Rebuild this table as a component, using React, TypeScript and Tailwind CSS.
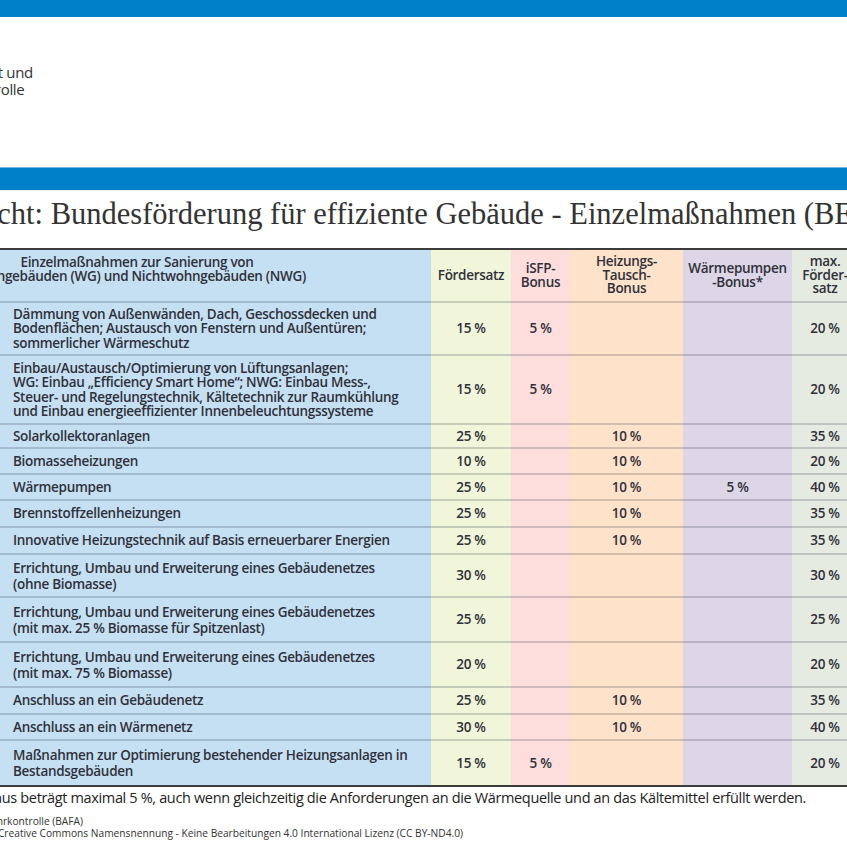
import React from "react";

type Row = {
  lines: string[];
  h: string;
  lead?: string;
  rate: string;
  isfp?: string;
  heiz?: string;
  wp?: string;
  max: string;
  last?: boolean;
};

const rows: Row[] = [
  {
    lines: [
      "Dämmung von Außenwänden, Dach, Geschossdecken und",
      "Bodenflächen; Austausch von Fenstern und Außentüren;",
      "sommerlicher Wärmeschutz",
    ],
    h: "h-[53px]",
    rate: "15 %",
    isfp: "5 %",
    max: "20 %",
  },
  {
    lines: [
      "Einbau/Austausch/Optimierung von Lüftungsanlagen;",
      "WG: Einbau „Efficiency Smart Home“; NWG: Einbau Mess-,",
      "Steuer- und Regelungstechnik, Kältetechnik zur Raumkühlung",
      "und Einbau energieeffizienter Innenbeleuchtungssysteme",
    ],
    h: "h-[69px]",
    rate: "15 %",
    isfp: "5 %",
    max: "20 %",
  },
  { lines: ["Solarkollektoranlagen"], h: "h-[24px]", rate: "25 %", heiz: "10 %", max: "35 %" },
  { lines: ["Biomasseheizungen"], h: "h-[26px]", rate: "10 %", heiz: "10 %", max: "20 %" },
  { lines: ["Wärmepumpen"], h: "h-[26px]", rate: "25 %", heiz: "10 %", wp: "5 %", max: "40 %" },
  { lines: ["Brennstoffzellenheizungen"], h: "h-[27px]", rate: "25 %", heiz: "10 %", max: "35 %" },
  {
    lines: ["Innovative Heizungstechnik auf Basis erneuerbarer Energien"],
    h: "h-[27px]",
    rate: "25 %",
    heiz: "10 %",
    max: "35 %",
  },
  {
    lines: ["Errichtung, Umbau und Erweiterung eines Gebäudenetzes", "(ohne Biomasse)"],
    h: "h-[43px]",
    lead: "leading-[16px]",
    rate: "30 %",
    max: "30 %",
  },
  {
    lines: [
      "Errichtung, Umbau und Erweiterung eines Gebäudenetzes",
      "(mit max. 25 % Biomasse für Spitzenlast)",
    ],
    h: "h-[45px]",
    lead: "leading-[16px]",
    rate: "25 %",
    max: "25 %",
  },
  {
    lines: ["Errichtung, Umbau und Erweiterung eines Gebäudenetzes", "(mit max. 75 % Biomasse)"],
    h: "h-[45px]",
    lead: "leading-[16px]",
    rate: "20 %",
    max: "20 %",
  },
  { lines: ["Anschluss an ein Gebäudenetz"], h: "h-[27px]", rate: "25 %", heiz: "10 %", max: "35 %" },
  { lines: ["Anschluss an ein Wärmenetz"], h: "h-[26px]", rate: "30 %", heiz: "10 %", max: "40 %" },
  {
    lines: ["Maßnahmen zur Optimierung bestehender Heizungsanlagen in", "Bestandsgebäuden"],
    h: "h-[44px]",
    lead: "leading-[16px]",
    rate: "15 %",
    isfp: "5 %",
    max: "20 %",
    last: true,
  },
];

const grid = "grid w-[858px] grid-cols-[431px_80px_59px_113px_109px_66px]";
const sep = "border-b-2 border-[#1e2a40]/20";

const TableRow = ({ row }: { row: Row }) => {
  const line = row.last ? "" : sep;
  const val = `flex items-center justify-center ${line}`;
  return (
    <div className={`${grid} ${row.h}`}>
      <div className={`flex flex-col justify-center bg-[#c6e0f3] pl-[13px] ${line} ${row.lead ?? "leading-[14.3px]"}`}>
        {row.lines.map((l) => (
          <span key={l} className="whitespace-nowrap">
            {l}
          </span>
        ))}
      </div>
      <div className={`bg-[#f1f6da] ${val}`}>{row.rate}</div>
      <div className={`bg-[#fddedd] ${val}`}>{row.isfp}</div>
      <div className={`bg-[#fee3ca] ${val}`}>{row.heiz}</div>
      <div className={`bg-[#dcd6e6] ${val}`}>{row.wp}</div>
      <div className={`bg-[#e6ebe1] ${val}`}>{row.max}</div>
    </div>
  );
};

const App: React.FC = () => {
  const head = `flex flex-col items-center justify-center text-center leading-[13.8px] ${sep}`;
  return (
    <div className="w-[847px] h-[847px] overflow-hidden bg-white font-['Open_Sans',sans-serif] text-[#30303a]">
      <div className="h-[17px] bg-[#0080c9]" />

      {/* logo text, cut off at the left edge */}
      <div className="h-[150px] pt-[29px]">
        <div className="flex w-[33px] justify-end">
          <div className="shrink-0 whitespace-nowrap text-[15px] leading-[17.5px] tracking-[-0.3px] text-[#333]">
            <div>Bundesamt</div>
            <div>für Wirtschaft und</div>
            <div>Ausfuhrkontrolle</div>
          </div>
        </div>
      </div>

      <div className="h-px bg-[#74b4e0]" />
      <div className="h-[22px] bg-[#0080c9]" />
      <div className="h-px bg-[#e1ecf5]" />

      <div className="h-[57px] pt-[7.5px]">
        <h1 className="-ml-[84px] whitespace-nowrap font-['Liberation_Serif',serif] text-[30.5px] leading-[30.5px] text-[#333]">
          Übersicht: Bundesförderung für effiziente Gebäude - Einzelmaßnahmen (BEG EM)
        </h1>
      </div>

      <div className="border-y-2 border-[#3c3c3c] text-[13.5px] font-semibold tracking-[-0.3px]">
        <div className={`${grid} h-[53px]`}>
          <div className={`bg-[#c6e0f3] pt-[5px] leading-[14px] ${sep}`}>
            <div className="flex w-[274px] flex-col items-center">
              <span className="whitespace-nowrap">Einzelmaßnahmen zur Sanierung von</span>
              <span className="whitespace-nowrap">Wohngebäuden (WG) und Nichtwohngebäuden (NWG)</span>
            </div>
          </div>
          <div className={`bg-[#f1f6da] ${head}`}>Fördersatz</div>
          <div className={`bg-[#fddedd] ${head}`}>
            <span>iSFP-</span>
            <span>Bonus</span>
          </div>
          <div className={`bg-[#fee3ca] ${head}`}>
            <span>Heizungs-</span>
            <span>Tausch-</span>
            <span>Bonus</span>
          </div>
          <div className={`bg-[#dcd6e6] ${head}`}>
            <span>Wärmepumpen</span>
            <span>-Bonus*</span>
          </div>
          <div className={`bg-[#e6ebe1] ${head}`}>
            <span>max.</span>
            <span>Förder-</span>
            <span>satz</span>
          </div>
        </div>
        {rows.map((r) => (
          <TableRow key={r.lines.join(" ") + r.rate} row={r} />
        ))}
      </div>

      <div className="mt-[5px] flex w-[806px] justify-end">
        <p className="shrink-0 whitespace-nowrap text-[14.5px] leading-[11px] tracking-[-0.35px] text-[#222]">
          * Der Wärmepumpen-Bonus beträgt maximal 5 %, auch wenn gleichzeitig die Anforderungen an die Wärmequelle und an das Kältemittel erfüllt werden.
        </p>
      </div>

      <div className="mt-[12px] text-[10.2px] leading-[12px] font-medium text-[#333]">
        <div className="flex w-[83px] justify-end">
          <span className="shrink-0 whitespace-nowrap">
            Quelle: Bundesamt für Wirtschaft und Ausfuhrkontrolle (BAFA)
          </span>
        </div>
        <div className="flex w-[463px] justify-end">
          <span className="shrink-0 whitespace-nowrap">
            Lizenz: Creative Commons Namensnennung - Keine Bearbeitungen 4.0 International Lizenz (CC BY-ND4.0)
          </span>
        </div>
      </div>
    </div>
  );
};

export default App;
